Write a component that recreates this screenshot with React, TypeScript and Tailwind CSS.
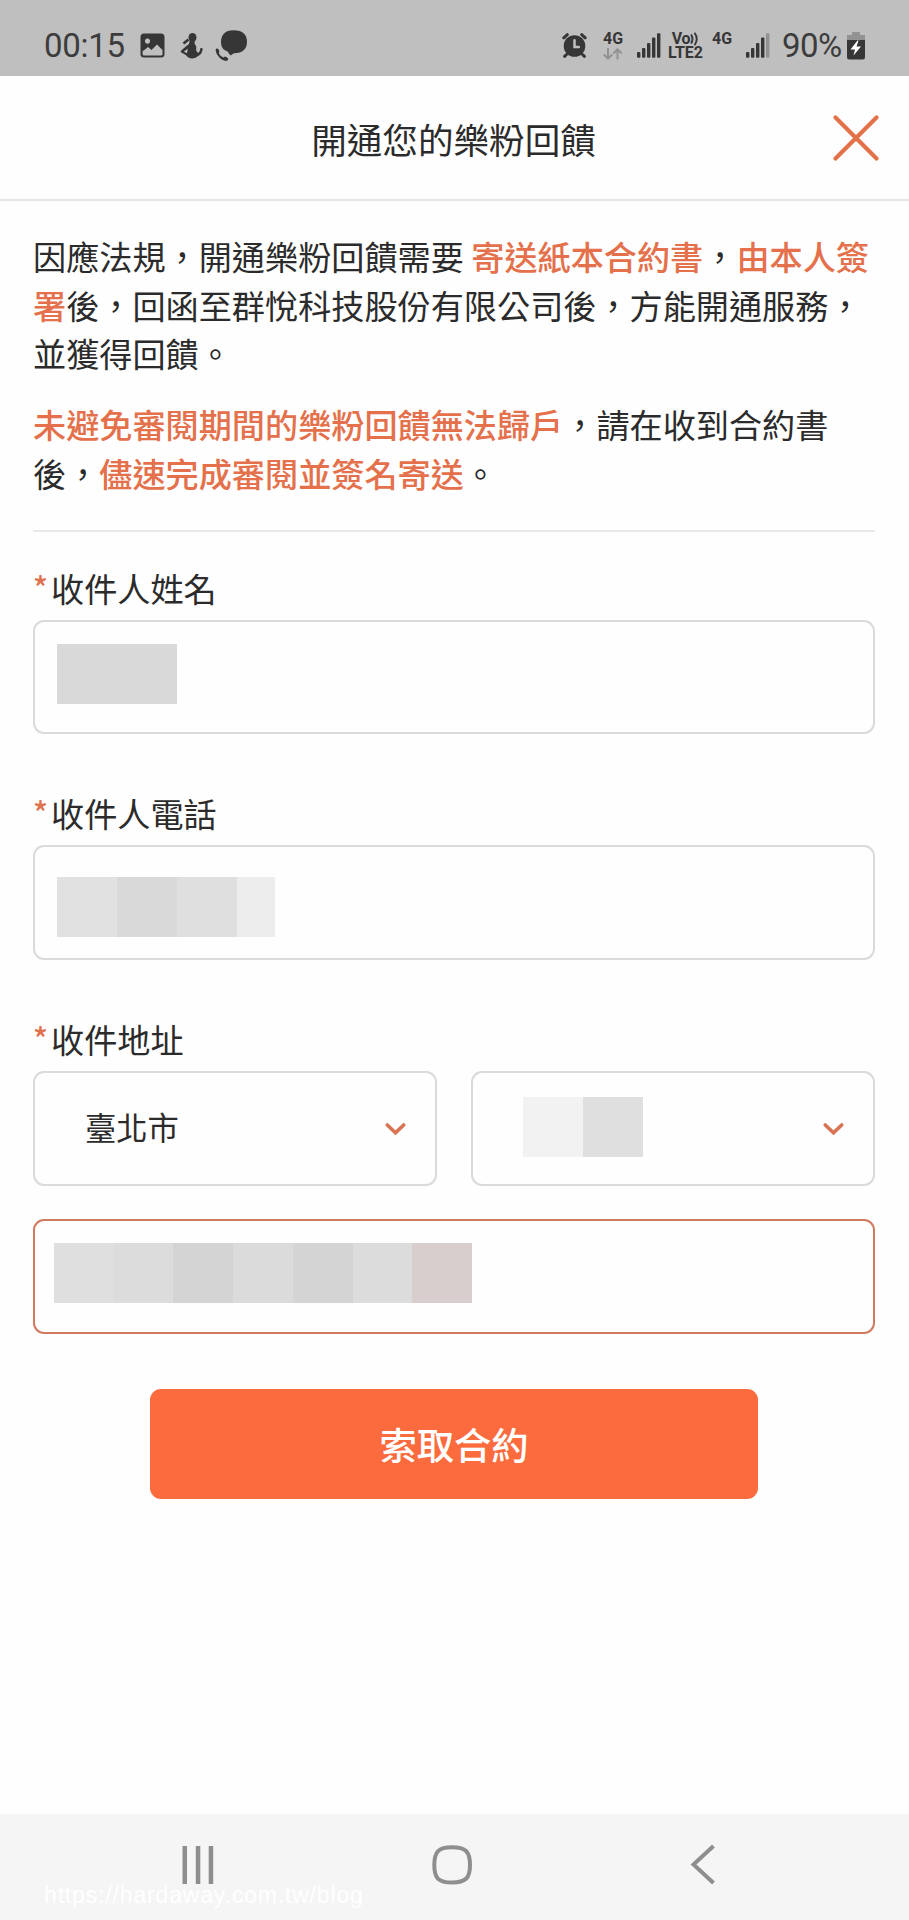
import React from 'react';
import { clsx } from 'clsx';

const CENSORED = {
  name: ['bg-[#d9d9d9]', 'bg-[#d9d9d9]'],
  phone: ['bg-[#e1e1e1]', 'bg-[#d9d9d9]', 'bg-[#dfdfdf]', 'bg-[#ededed]'],
  district: ['bg-[#f2f2f2]', 'bg-[#dfdfdf]'],
  address: [
    'bg-[#dfdfdf]',
    'bg-[#dcdcdc]',
    'bg-[#d4d4d4]',
    'bg-[#dbdbdb]',
    'bg-[#d4d4d4]',
    'bg-[#dcdcdc]',
    'bg-[#d7cecd]',
  ],
};

function Mosaic({ cells, className }: { cells: string[]; className?: string }) {
  return (
    <div className={clsx('flex h-[60px]', className)}>
      {cells.map((c, i) => (
        <div key={i} className={clsx('h-full flex-1', c, cells === CENSORED.phone && i === 3 && 'max-w-[38px]')} />
      ))}
    </div>
  );
}

function Signal({ weak = false, className }: { weak?: boolean; className?: string }) {
  return (
    <svg className={clsx('h-[25px] w-6 shrink-0', className)} viewBox="0 0 24 25" fill="#363636">
      <rect x="0" y="19" width="3.4" height="5.8" rx="1" />
      <rect x="5" y="15" width="3.4" height="9.8" rx="1" />
      <rect x="10" y="10" width="3.4" height="14.8" rx="1" />
      <rect x="15" y="4.5" width="3.4" height="20.3" rx="1" />
      <rect x="20" y="0.3" width="3.4" height="24.5" rx="1" fill={weak ? '#929292' : '#363636'} />
    </svg>
  );
}

function StatusBar() {
  return (
    <div className="flex h-[76px] items-start bg-[#bfbfbf] pl-11 pr-[43px] pt-[30px] font-['Roboto'] text-[#363636]">
      <span className="mt-[-4px] w-[96px] text-[33px] leading-[39px] tracking-[-0.3px] text-[#3c3c3c]">00:15</span>
      <svg className="mt-[3px] h-[25px] w-[25px]" viewBox="0 0 25 25">
        <path
          fill="#363636"
          fillRule="evenodd"
          d="M4 .5h17a3.500 3.500 0 0 1 3.500 3.500v17a3.500 3.500 0 0 1-3.500 3.500H4A3.500 3.500 0 0 1 .5 21V4A3.500 3.500 0 0 1 4 .5ZM2.600 17.500V21Q2.600 22.500 4 22.500H21Q22.500 22.500 22.500 21V17L17 11.500L11.500 17L8 14L3.500 17.800ZM7.500 5.500a2.600 2.600 0 1 0 .01 0Z"
        />
      </svg>
      <svg className="ml-[15px] mt-[3px] h-[26px] w-6" viewBox="0 0 24 26" fill="#363636">
        <ellipse cx="12.500" cy="4.600" rx="4" ry="4.600" />
        <path d="M3.500 10.500L8.500 6.500" fill="none" stroke="#363636" strokeWidth="2.600" />
        <path d="M9.500 8H14.500L14.800 11.500Q17 12.500 16 17Q17.500 20.500 18.800 19.500Q20 18 20.500 15Q22.500 14.500 22.700 16Q22 21 19 22.500Q13 27.500 8 24.300Q6.500 22.500 5 21.500L1.200 19.500Q.3 18.500 1.200 17.500L7 12.500Q9.500 11.500 9.500 8ZM3.800 18.500L7 20.200L7.800 15.800Z" fillRule="evenodd" />
      </svg>
      <svg className="ml-[11px] h-8 w-[33px]" viewBox="0 0 33 32" fill="#363636">
        <path d="M18.500.3C28 .3 32 5 32 11.800S28 23.300 19 23.300L15.500 25.500L12.500 21.500C8 20 6 17 6 12C6 5 10 .3 18.500.3Z" />
        <path d="M1.500 18.500Q3 18 4 20L4.300 22.500L3.800 23.500Q5.500 26.500 8.500 27.500L9.800 26.500Q12 27 13.300 28.800Q13.500 30.500 11 31Q8 31 4.800 28Q1 24.500.6 20.500Q.6 19 1.500 18.500Z" />
      </svg>

      <svg className="ml-auto mt-[3px] h-[25px] w-[25px]" viewBox="0 0 25 25" fill="none" stroke="#363636" strokeLinecap="round">
        <circle cx="12.500" cy="13" r="10.800" fill="#363636" stroke="none" />
        <path d="M1.800 4.800L5.300 1.700M23.200 4.800L19.700 1.700M4.500 21.500L2.600 23.300M20.500 21.500L22.400 23.300" strokeWidth="3" />
        <path d="M12.500 7.200V14H16.800" stroke="#bfbfbf" strokeWidth="2.500" />
      </svg>
      <div className="ml-4 flex w-[21px] flex-col">
        <span className="text-[16px] font-bold leading-[17px]">4G</span>
        <svg className="mt-[1px] h-3 w-5" viewBox="0 0 20 12" fill="none" stroke="#929292" strokeWidth="2">
          <path d="M5 0V10.500M.8 6.500L5 10.700L9.200 6.500M14.500 11.500V1.500M10.300 5.500L14.500 1.300L18.700 5.500" />
        </svg>
      </div>
      <Signal className="ml-[13px] mt-[3px]" />
      <div className="ml-[7px] flex w-[35px] flex-col items-center whitespace-nowrap pt-[1px] text-[16px] font-bold">
        <span className="flex h-[15px] leading-[15px] tracking-[-0.4px]">
          Vo
          <svg className="mt-[1px] h-[14px] w-[9px]" viewBox="0 0 9 14" fill="none" stroke="#363636" strokeWidth="1.900">
            <path d="M1 2.500Q4 7 1 11.500M4.500 .8Q9 7 4.500 13.200" />
          </svg>
        </span>
        <span className="h-[14px] leading-[14px]">LTE2</span>
      </div>
      <span className="ml-[9px] w-[21px] text-[16px] font-bold leading-[17px]">4G</span>
      <Signal weak className="ml-[13px] mt-[3px]" />
      <span className="ml-3 mt-[-4px] w-16 whitespace-nowrap text-[33px] leading-[39px] tracking-[-0.6px] text-[#3c3c3c]">90%</span>
      <svg className="mt-[2px] h-7 w-5" viewBox="0 0 20 28">
        <path d="M6 0H14V3H19V9H1V3H6Z" fill="#929292" />
        <path d="M1 8H19V25Q19 27.500 17 27.500H3Q1 27.500 1 25Z" fill="#363636" />
        <path d="M11.500 8.500L4.500 17.500H9L7.500 23.500L15 14.500H10.500L12.500 8.500Z" fill="#fff" />
      </svg>
    </div>
  );
}

function Label({ children }: { children: React.ReactNode }) {
  return (
    <label className="flex h-[50px] items-start text-[33.15px] leading-[36px]">
      <span className="mt-[-1px] w-[18px] text-[31px] font-medium leading-[36px] text-[#e0714d]">*</span>
      {children}
    </label>
  );
}

function Chevron() {
  return (
    <svg className="h-3 w-[21px]" viewBox="0 0 21 12" fill="none" stroke="#d97453" strokeWidth="3.600" strokeLinecap="round">
      <path d="M2.300 2L10.500 9.800L18.700 2" />
    </svg>
  );
}

export default function App() {
  return (
    <div className="relative flex h-[1920px] w-[909px] flex-col overflow-hidden bg-[#fefefe] font-['Noto_Sans_CJK_TC',sans-serif] text-[#2b2b2b]" lang="zh-Hant">
      <StatusBar />

      <header className="flex h-[125px] items-center justify-between border-b-2 border-[#e6e6e6] pl-[74px] pr-[30px]">
        <h1 className="flex-1 pt-[3px] text-center text-[35.600px] leading-[52px]">開通您的樂粉回饋</h1>
        <button aria-label="關閉">
          <svg className="h-[46px] w-[46px]" viewBox="0 0 46 46" fill="none" stroke="#e3714a" strokeWidth="4.200" strokeLinecap="round">
            <path d="M2.500 2.500L43.500 43.500M43.500 2.500L2.500 43.500" />
          </svg>
        </button>
      </header>

      <main className="flex-1 pl-[33px] pr-[34px] pt-[31px]">
        <section className="h-[300px] border-b-2 border-[#e9e9e9] text-[33.150px] leading-[48.500px]">
          <p>
            因應法規，開通樂粉回饋需要 <b className="font-medium text-[#e4714b]">寄送紙本合約書</b>，
            <b className="font-medium text-[#e4714b]">由本人簽<br />署</b>後，回函至群悅科技股份有限公司後，方能開通服務，
            <br />
            並獲得回饋。
          </p>
          <p className="mt-[22.5px]">
            <b className="font-medium text-[#e4714b]">未避免審閱期間的樂粉回饋無法歸戶</b>，請在收到合約書
            <br />
            後，<b className="font-medium text-[#e4714b]">儘速完成審閱並簽名寄送</b>。
          </p>
        </section>

        <form className="flex flex-col">
          <div className="mt-[38px]">
            <Label>收件人姓名</Label>
            <div className="h-[114px] rounded-[11px] border-2 border-[#dadada] pl-[22px] pt-[22px]">
              <Mosaic cells={CENSORED.name} className="w-[120px]" />
            </div>
          </div>

          <div className="mt-[61px]">
            <Label>收件人電話</Label>
            <div className="h-[115px] rounded-[11px] border-2 border-[#dadada] pl-[22px] pt-[30px]">
              <Mosaic cells={CENSORED.phone} className="w-[218px]" />
            </div>
          </div>

          <div className="mt-[61px]">
            <Label>收件地址</Label>
            <div className="flex gap-[34px]">
              <div className="flex h-[115px] flex-1 items-center justify-between rounded-[11px] border-2 border-[#dadada] pl-[50px] pr-[29px] text-[31.300px]">
                <span className="mt-[-2px]">臺北市</span>
                <Chevron />
              </div>
              <div className="flex h-[115px] flex-1 items-center justify-between rounded-[11px] border-2 border-[#dadada] pl-[50px] pr-[29px]">
                <Mosaic cells={CENSORED.district} className="mt-[-4px] w-[120px]" />
                <Chevron />
              </div>
            </div>
            <div className="mt-[33px] h-[115px] rounded-[11px] border-2 border-[#d07a5f] pl-[19px] pt-[22px]">
              <Mosaic cells={CENSORED.address} className="w-[418px]" />
            </div>
          </div>

          <button
            type="button"
            className="mt-[55px] h-[110px] w-[608px] self-center rounded-[11px] bg-[#fb6b3e] pt-[2px] text-[37.300px] font-medium text-white"
          >
            索取合約
          </button>
        </form>
      </main>

      <nav className="flex h-[106px] items-start bg-[#f5f5f5] pt-[30px] text-[#8e8e8e]">
        <svg className="ml-[181px] mt-[2px] h-[38px] w-[33px]" viewBox="0 0 33 38" fill="currentColor">
          <path d="M1.500 0H6V38H1.500ZM14.800 0H19.300V38H14.800ZM27.700 0H32.200V38H27.700Z" />
        </svg>
        <svg className="ml-[218px] mt-[1px] h-10 w-10" viewBox="0 0 40 40" fill="none" stroke="currentColor" strokeWidth="4">
          <path d="M20 2.200C33.500 2.200 38 6.500 38 20S33.500 37.500 20 37.500S2.300 33.500 2.300 20S6.500 2.200 20 2.200Z" />
        </svg>
        <svg className="ml-[218px] h-[41px] w-[26px]" viewBox="0 0 26 41" fill="none" stroke="currentColor" strokeWidth="4">
          <path d="M23.500 2L3.500 20.500L23.500 39" />
        </svg>
      </nav>

      <span className="absolute left-11 top-[1882px] font-['Liberation_Sans',sans-serif] text-[23px] leading-[27px] tracking-[0.84px] text-white">
        https://hardaway.com.tw/blog
      </span>
    </div>
  );
}
